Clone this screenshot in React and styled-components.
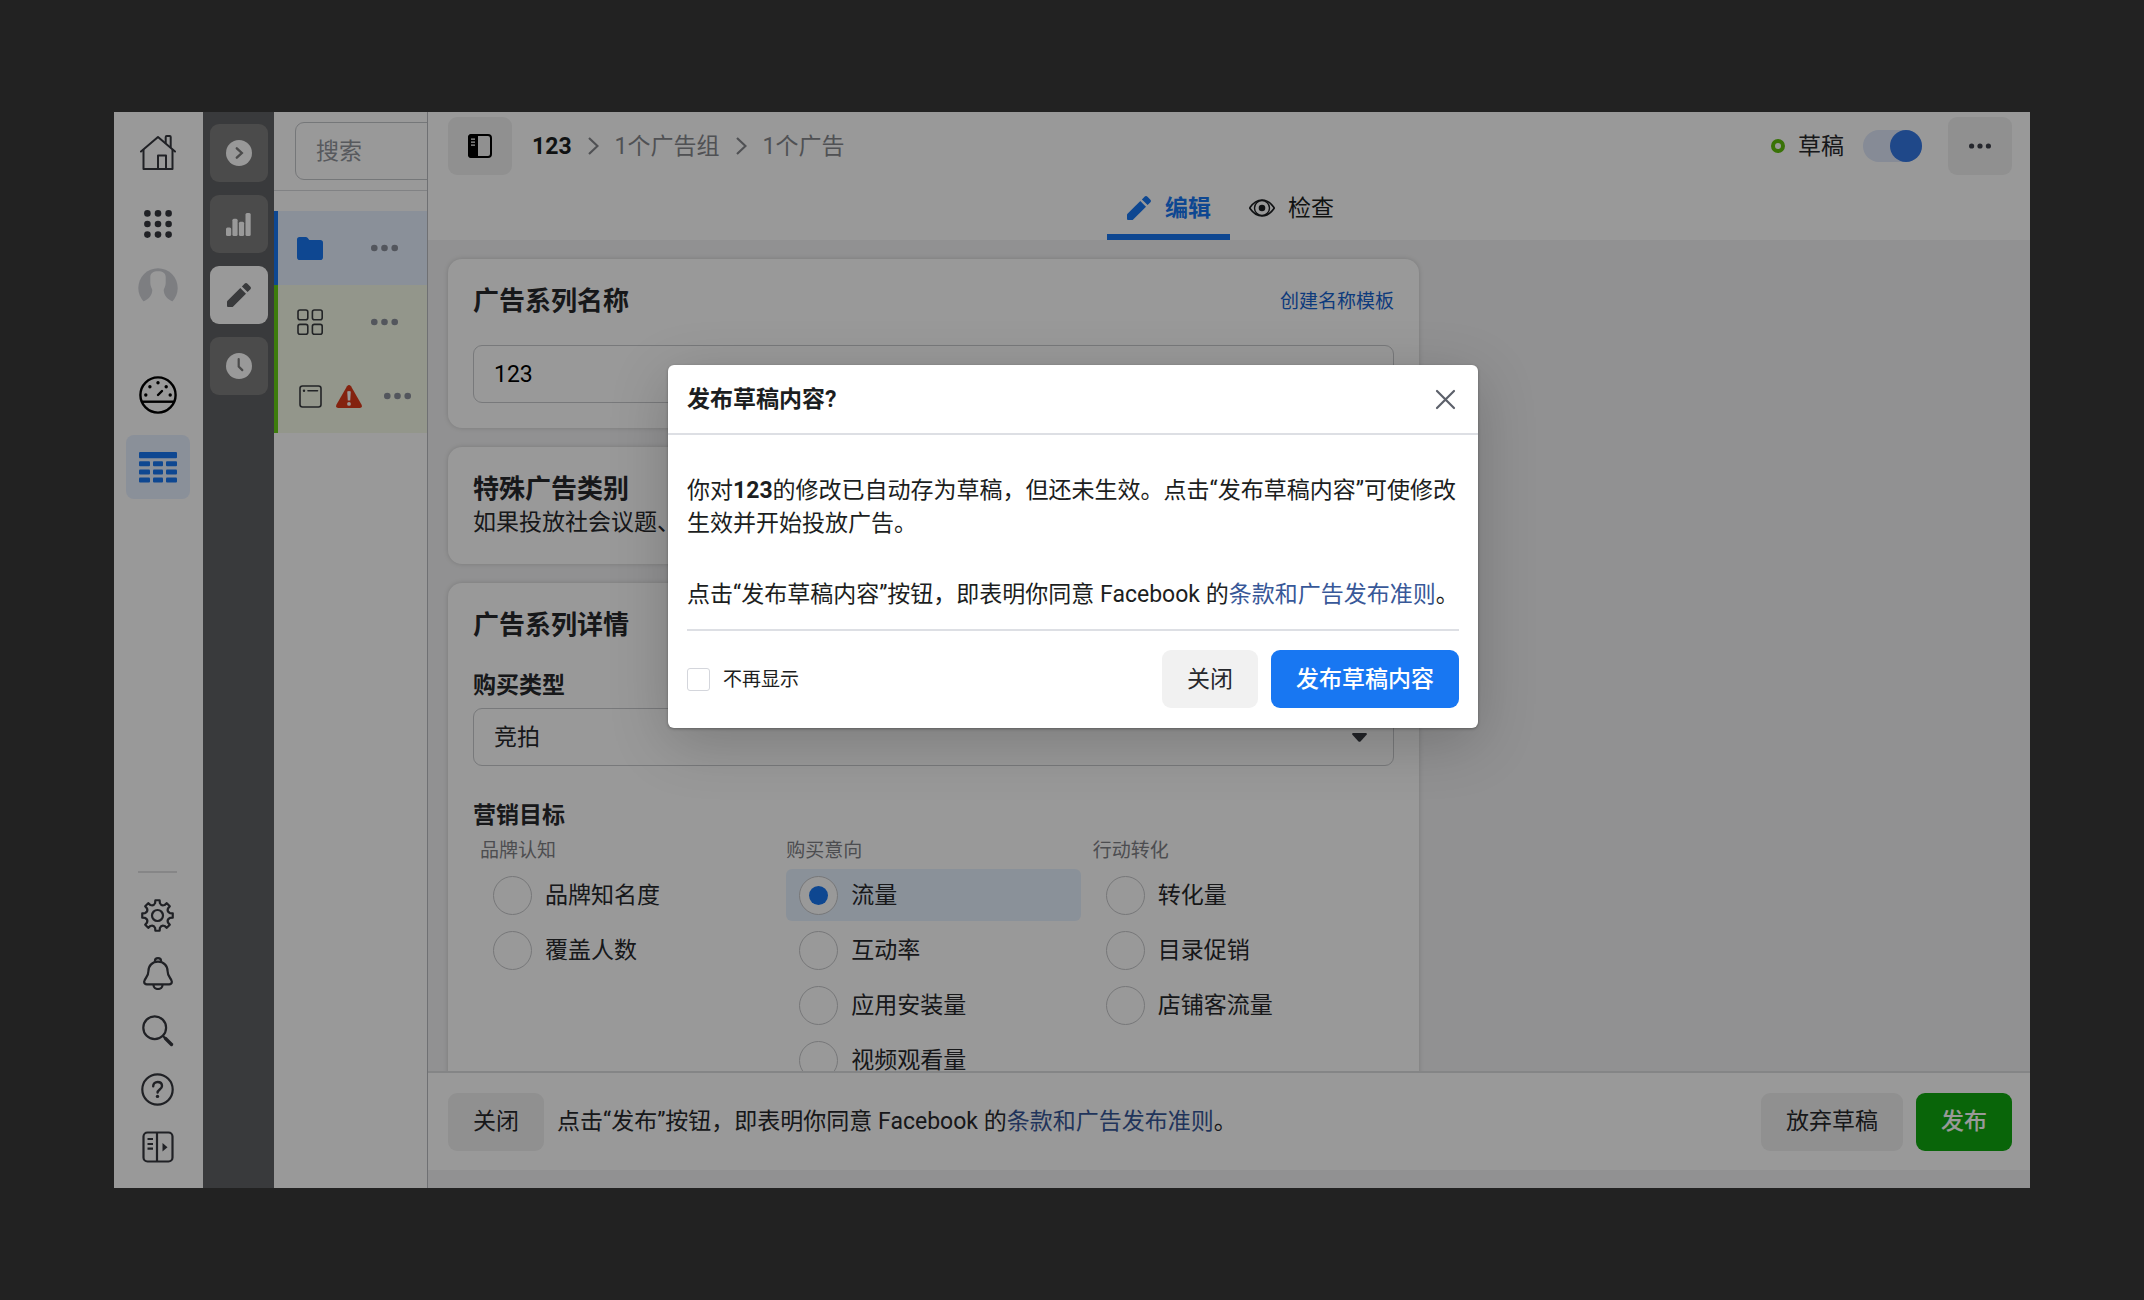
import React, { useState } from "react";
import styled, { createGlobalStyle } from "styled-components";

const GlobalStyle = createGlobalStyle`
  * {
    box-sizing: border-box;
  }
  body {
    margin: 0;
    background: #222222;
    color: #27282c;
    font-family: Roboto, "Noto Sans CJK SC", sans-serif;
    font-size: 23px;
    line-height: 33px;
  }
  button, input, select {
    font: inherit;
    color: inherit;
  }
  button {
    border: none;
    padding: 0;
    background: none;
    cursor: pointer;
  }
  svg {
    display: block;
    flex: none;
  }
  h2, h3, h4, p {
    margin: 0;
    padding: 0;
  }
`;

const Page = styled.div`
  height: 100vh;
  padding: 112px 114px;
`;

const AppWindow = styled.div`
  position: relative;
  display: flex;
  height: 100%;
  overflow: hidden;
  background: #ffffff;
`;

/* left rail */

const Rail = styled.nav`
  display: flex;
  flex-direction: column;
  align-items: center;
  flex: none;
  width: 89px;
  padding: 9px 2px 12px 0;
  color: #36383f;
`;

const RailGroup = styled.div`
  display: flex;
  flex-direction: column;
  align-items: center;
  gap: ${({ $gap }) => $gap || 0}px;
  margin-bottom: 50px;
`;

const RailBottom = styled.div`
  display: flex;
  flex-direction: column;
  align-items: center;
  margin-top: auto;
  padding-top: 13px;
  border-top: 2px solid #dfdfe1;
`;

const RailButton = styled.button`
  display: flex;
  align-items: center;
  justify-content: center;
  width: 64px;
  height: ${({ $height }) => $height || 64}px;
  border-radius: 8px;
  background: ${({ $active }) => ($active ? "#e7f0ff" : "none")};
  color: ${({ $active }) => ($active ? "#1877f2" : "inherit")};
`;

const SmallRailButton = styled(RailButton)`
  width: 39px;
  height: 58px;
`;

/* dark tool bar */

const ToolBar = styled.nav`
  display: flex;
  flex-direction: column;
  align-items: center;
  gap: 13px;
  flex: none;
  width: 71px;
  padding-top: 12px;
  background: #606164;
`;

const ToolButton = styled.button`
  display: flex;
  align-items: center;
  justify-content: center;
  width: 58px;
  height: 58px;
  border-radius: 9px;
  background: ${({ $active }) => ($active ? "#ffffff" : "#7d7d7d")};
  color: ${({ $active }) => ($active ? "#606164" : "#ffffff")};
`;

/* campaign tree */

const Tree = styled.aside`
  flex: none;
  width: 154px;
  overflow: hidden;
  border-right: 1px solid #b9bbc0;
`;

const SearchBox = styled.div`
  height: 79px;
  margin-bottom: 20px;
  padding: 10px 0 0 21px;
  border-bottom: 1px solid #d8d9dc;
`;

const SearchInput = styled.input`
  width: 240px;
  height: 58px;
  padding: 0 20px;
  border: 1px solid #c4c6ca;
  border-radius: 9px;
  background: #ffffff;
  &::placeholder {
    color: #92959c;
    opacity: 1;
  }
`;

const TreeRow = styled.div`
  display: flex;
  align-items: center;
  height: 74px;
  padding: 0 ${({ $wide }) => ($wide ? 16 : 29)}px 0 19px;
  border-left: 4px solid ${({ $selected }) => ($selected ? "#1877f2" : "#66cf14")};
  background: ${({ $selected }) => ($selected ? "#e7f0ff" : "#f5fbe8")};
`;

const TreeIcon = styled.span`
  display: flex;
  align-items: center;
  justify-content: center;
  width: 26px;
  margin-right: 13px;
`;

const DotsButton = styled.button`
  margin-left: auto;
  color: #8a8f9b;
`;

/* main column */

const Main = styled.main`
  display: flex;
  flex: 1;
  flex-direction: column;
  min-width: 0;
  background: #f2f2f3;
`;

const Header = styled.header`
  flex: none;
  padding-top: 5px;
  background: #ffffff;
`;

const HeaderRow = styled.div`
  display: flex;
  align-items: center;
  padding: 0 18px 0 20px;
`;

const SquareButton = styled.button`
  display: flex;
  align-items: center;
  justify-content: center;
  width: 64px;
  height: 58px;
  border-radius: 9px;
  background: #f1f1f1;
  color: #3f414b;
`;

const Crumbs = styled.div`
  display: flex;
  align-items: center;
  gap: 16px;
  margin-left: 20px;
  color: #85878c;
`;

const Crumb = styled.a`
  color: ${({ $current }) => ($current ? "#1c1e21" : "#85878c")};
  font-weight: ${({ $current }) => ($current ? 700 : 400)};
  text-decoration: none;
`;

const Status = styled.div`
  display: flex;
  align-items: center;
  gap: 13px;
  margin-left: auto;
`;

const StatusRing = styled.span`
  width: 14px;
  height: 14px;
  border: 4px solid #5fbf0c;
  border-radius: 50%;
`;

const StatusLabel = styled.label`
  display: flex;
  align-items: center;
  gap: 19px;
  margin-right: 13px;
`;

const Toggle = styled.input`
  appearance: none;
  display: flex;
  justify-content: flex-start;
  width: 59px;
  height: 32px;
  margin: 0;
  border-radius: 16px;
  background: #dcdfe6;
  cursor: pointer;
  &::before {
    content: "";
    width: 32px;
    height: 32px;
    border-radius: 50%;
    background: #90949c;
  }
  &:checked {
    justify-content: flex-end;
    background: #dfe8fa;
  }
  &:checked::before {
    background: #3578e5;
  }
`;

const Tabs = styled.div`
  display: flex;
  justify-content: center;
  padding-left: 2px;
`;

const Tab = styled.button`
  display: flex;
  align-items: center;
  gap: 13px;
  height: 65px;
  padding: 7px 19px 0;
  border-bottom: 6px solid ${({ $active }) => ($active ? "#1877f2" : "transparent")};
  color: ${({ $active }) => ($active ? "#1877f2" : "#1c1e21")};
  font-weight: ${({ $active }) => ($active ? 700 : 400)};
`;

const TabIcon = styled.span`
  display: flex;
  justify-content: center;
  width: 26px;
`;

const Content = styled.div`
  flex: 1;
  min-height: 0;
  overflow: hidden;
  padding: 19px 20px 0;
`;

const Card = styled.section`
  max-width: 971px;
  margin-bottom: 19px;
  padding: 25px;
  border-radius: 14px;
  background: #ffffff;
  box-shadow: 0 0 5px rgba(0, 0, 0, 0.16);
`;

const CardHead = styled.div`
  display: flex;
  align-items: center;
  justify-content: space-between;
  margin-bottom: 27px;
`;

const CardTitle = styled.h2`
  font-size: 26px;
  font-weight: 700;
  line-height: 34px;
`;

const TemplateLink = styled.a`
  color: #1763cf;
  font-size: 19px;
  text-decoration: none;
`;

const TextInput = styled.input`
  width: 100%;
  height: 58px;
  padding: 0 20px;
  border: 1px solid #c8cacd;
  border-radius: 9px;
  background: #ffffff;
  color: #000000;
`;

const FieldLabel = styled.label`
  display: block;
  margin-bottom: 6px;
  font-weight: 700;
`;

const GoalsTitle = styled.h3`
  font-size: 23px;
  font-weight: 700;
`;

const SelectWrap = styled.div`
  position: relative;
  margin-bottom: 33px;
`;

const Select = styled.select`
  appearance: none;
  display: block;
  width: 100%;
  height: 58px;
  padding: 0 20px;
  border: 1px solid #c8cacd;
  border-radius: 9px;
  background: #ffffff;
`;

const Caret = styled.span`
  position: absolute;
  top: 25px;
  right: 27px;
  color: #3a3c44;
  pointer-events: none;
`;

const Goals = styled.div`
  display: grid;
  grid-template-columns: repeat(3, 1fr);
  gap: 12px;
  margin: 0 7px;
`;

const GoalTitle = styled.h4`
  padding: 2px 0;
  color: #7f8186;
  font-size: 19px;
  font-weight: 400;
`;

const Goal = styled.label`
  display: flex;
  align-items: center;
  gap: 13px;
  height: 52px;
  margin-bottom: 3px;
  padding-left: 13px;
  border-radius: 6px;
  background: ${({ $checked }) => ($checked ? "#e7f2ff" : "none")};
`;

const Radio = styled.input`
  appearance: none;
  display: flex;
  align-items: center;
  justify-content: center;
  width: 39px;
  height: 39px;
  margin: 0;
  border: 1px solid #c6c7ca;
  border-radius: 50%;
  background: #ffffff;
  &:checked::before {
    content: "";
    width: 19px;
    height: 19px;
    border-radius: 50%;
    background: #1877f2;
  }
`;

const BottomBar = styled.footer`
  display: flex;
  align-items: center;
  gap: 13px;
  flex: none;
  height: 99px;
  margin-bottom: 18px;
  padding: 0 18px 0 20px;
  border-top: 2px solid #dddee0;
  background: #ffffff;
`;

const Agreement = styled.p`
  margin-right: auto;
`;

const Button = styled.button`
  height: 58px;
  padding: 0 25px;
  border-radius: 9px;
  white-space: nowrap;
  background: ${({ $kind }) =>
    $kind === "primary" ? "#1877f2" : $kind === "success" ? "#0fa80f" : "#f1f1f1"};
  color: ${({ $kind }) => ($kind ? "#ffffff" : "#27282c")};
  font-weight: ${({ $kind }) => ($kind ? 500 : 400)};
`;

const TermsLink = styled.a`
  color: #385898;
  text-decoration: none;
`;

/* dialog */

const Overlay = styled.div`
  position: absolute;
  inset: 0;
  display: flex;
  align-items: flex-start;
  justify-content: center;
  padding: 253px 0 0 2px;
  background: rgba(0, 0, 0, 0.4);
`;

const Dialog = styled.div`
  width: 810px;
  max-width: 100%;
  border-radius: 6px;
  background: #ffffff;
  color: #1c1e21;
  box-shadow: 0 1px 3px rgba(0, 0, 0, 0.3), 0 14px 60px rgba(0, 0, 0, 0.2);
`;

const DialogHead = styled.div`
  display: flex;
  align-items: center;
  justify-content: space-between;
  height: 70px;
  padding: 0 22px 0 19px;
  border-bottom: 2px solid #dddfe4;
`;

const DialogTitle = styled.h3`
  font-size: 23px;
  font-weight: 700;
`;

const Message = styled.div`
  padding: 39px 12px 18px 19px;
  p + p {
    margin-top: 38px;
  }
`;

const DialogFoot = styled.div`
  display: flex;
  align-items: center;
  gap: 13px;
  margin: 0 19px;
  padding: 19px 0 20px;
  border-top: 2px solid #dddfe4;
`;

const CheckLabel = styled.label`
  display: flex;
  align-items: center;
  gap: 13px;
  margin-right: auto;
  font-size: 19px;
`;

const Checkbox = styled.input`
  appearance: none;
  width: 23px;
  height: 23px;
  margin: 0;
  border: 1px solid #d4d6dc;
  border-radius: 3px;
  background: #ffffff;
  &:checked {
    background: #1877f2;
  }
`;

/* icons */

const HomeIcon = () => (
  <svg width="36" height="36" viewBox="0 0 36 36" fill="none" stroke="currentColor" strokeWidth="2" strokeLinecap="round" strokeLinejoin="round">
    <path d="M1 16.5 18 2l17 14.5" />
    <path d="M25.7 8V2q0-1 1-1h3q1 0 1 1v10" />
    <path d="M3.5 15v19h29V15" />
    <path d="M18 34V20.5h8V34" />
  </svg>
);

const AppsIcon = () => (
  <svg width="28" height="28" viewBox="0 0 28 28" fill="currentColor">
    {[3.4, 14, 24.6].map((y) => [3.4, 14, 24.6].map((x) => <circle key={x + "-" + y} cx={x} cy={y} r="3.3" />))}
  </svg>
);

const AvatarIcon = () => (
  <svg width="40" height="40" viewBox="0 0 40 40">
    <circle cx="20" cy="20" r="19.7" fill="#d0d2d8" />
    <path
      d="M12.3 9C12.3 5 15.3 3.2 20 3.2S27.7 5 27.7 9v6c0 3-1.5 5-2 7 .3 5 2.5 8.500 9.300 11.700V41H5v-7.300C11.800 30.500 14 27 14.300 22c-.5-2-2-4-2-7z"
      fill="#ffffff"
    />
  </svg>
);

const GaugeIcon = () => (
  <svg width="38" height="38" viewBox="0 0 38 38" fill="none" stroke="#000000" strokeWidth="2.4">
    <circle cx="19" cy="19" r="17.6" />
    <path d="M3 25.7h32" />
    <path d="M19 19l4-4" strokeLinecap="round" />
    <g fill="#000000" stroke="none">
      <circle cx="6.8" cy="19" r="1.7" />
      <circle cx="10.9" cy="10.7" r="1.7" />
      <circle cx="19" cy="6.8" r="1.7" />
      <circle cx="27.2" cy="10.7" r="1.7" />
      <circle cx="31.2" cy="19" r="1.7" />
    </g>
  </svg>
);

const TableIcon = () => (
  <svg width="38" height="31" viewBox="0 0 38 31" fill="currentColor">
    <rect x="0" y="0" width="38" height="6.3" rx="1" />
    {[9.3, 17.4, 25.4].map((y) => (
      <g key={y}>
        <rect x="0" y={y} width="11" height="5" rx="1" />
        <rect x="14" y={y} width="10" height="5" rx="1" />
        <rect x="27" y={y} width="11" height="5" rx="1" />
      </g>
    ))}
  </svg>
);

// eight teeth with hollow valleys between them
const gearPath = () => {
  const at = (deg, r) => {
    const a = ((deg - 90) * Math.PI) / 180;
    return `${(16.5 + r * Math.cos(a)).toFixed(2)} ${(16.5 + r * Math.sin(a)).toFixed(2)}`;
  };
  let d = "";
  for (let i = 0; i < 8; i++) {
    const a = i * 45;
    d += `${i ? "L" : "M"}${at(a - 8, 15.4)}L${at(a + 8, 15.4)}L${at(a + 11, 12.6)}`;
    d += `Q${at(a + 22.5, 10)} ${at(a + 34, 12.6)}`;
  }
  return d + "Z";
};

const GearIcon = () => (
  <svg width="33" height="33" viewBox="0 0 33 33" fill="none" stroke="currentColor" strokeWidth="2.2" strokeLinejoin="round">
    <path d={gearPath()} />
    <circle cx="16.5" cy="16.5" r="5.5" />
  </svg>
);

const BellIcon = () => (
  <svg width="30" height="33" viewBox="0 0 30 33" fill="none" stroke="currentColor" strokeWidth="2.2" strokeLinejoin="round">
    <path d="M15 4.7c5.6 0 9.6 4 9.6 9.5 0 6 3.8 6.8 4.2 10.3.2 1.9-1.2 2.8-2.6 2.8H3.8c-1.4 0-2.8-.9-2.6-2.8.4-3.5 4.2-4.3 4.2-10.3 0-5.5 4-9.5 9.6-9.5z" />
    <path d="M12 5V3.7a3 2.6 0 0 1 6 0V5" />
    <path d="M10.5 28a4.5 4 0 0 0 9 0" />
  </svg>
);

const SearchIcon = () => (
  <svg width="32" height="32" viewBox="0 0 32 32" fill="none" stroke="currentColor" strokeLinecap="round">
    <circle cx="12.7" cy="12.7" r="11.4" strokeWidth="2.2" />
    <path d="M21 21l2.5 2.5" strokeWidth="2.2" />
    <path d="M23.5 23.5l6 6" strokeWidth="3.4" />
  </svg>
);

const HelpIcon = () => (
  <svg width="33" height="33" viewBox="0 0 33 33" fill="none" stroke="currentColor" strokeWidth="2.2">
    <circle cx="16.5" cy="16.5" r="15.2" />
    <path d="M12.2 13.3c0-2.5 1.9-4.3 4.4-4.3 2.6 0 4.4 1.6 4.4 4 0 3.4-4.4 3.5-4.4 6.6" strokeWidth="2.4" strokeLinecap="round" />
    <circle cx="16.5" cy="23.4" r="1.7" fill="currentColor" stroke="none" />
  </svg>
);

const CollapseIcon = () => (
  <svg width="32" height="32" viewBox="0 0 32 32" fill="none" stroke="currentColor" strokeWidth="2.2">
    <rect x="1.5" y="1.5" width="29" height="29" rx="4" />
    <path d="M15 1.5v29M5.5 8H11M5.5 13H11M5.5 17.7H11" />
    <path d="M20.5 12l5 4.200-5 4.200z" fill="currentColor" stroke="none" />
  </svg>
);

const ExpandIcon = () => (
  <svg width="26" height="26" viewBox="0 0 26 26">
    <circle cx="13" cy="13" r="13" fill="currentColor" />
    <path d="M10.8 8.3l5 4.7-5 4.7" fill="none" stroke="#7d7d7d" strokeWidth="2.4" strokeLinecap="round" />
  </svg>
);

const BarsIcon = () => (
  <svg width="25" height="23" viewBox="0 0 25 23" fill="currentColor">
    <rect x="0" y="14.5" width="5.2" height="8.5" rx="1.5" />
    <rect x="6.4" y="5.7" width="5.2" height="17.3" rx="1.5" />
    <rect x="12.9" y="8.7" width="5.2" height="14.3" rx="1.5" />
    <rect x="19.5" y="0" width="5.2" height="23" rx="1.5" />
  </svg>
);

const PencilIcon = () => (
  <svg width="24" height="24" viewBox="0 0 24 24" fill="currentColor">
    <path d="M0 23v-4q0-.8.5-1.3L13.3 5l5.7 5.7L6.2 23.5q-.5.5-1.3.5H1q-1 0-1-1z" />
    <path d="M14.9 3.4L17.5.8q1.5-1.5 3 0l2.7 2.7q1.5 1.5 0 3l-2.6 2.6z" />
  </svg>
);

const ClockIcon = () => (
  <svg width="26" height="26" viewBox="0 0 26 26">
    <circle cx="13" cy="13" r="13" fill="currentColor" />
    <path d="M12.7 6v7.5l3.6 3.6" fill="none" stroke="#7d7d7d" strokeWidth="2.2" strokeLinecap="round" />
  </svg>
);

const FolderIcon = () => (
  <svg width="26" height="23" viewBox="0 0 26 23" fill="#1877f2">
    <path d="M2.5 0h6.3q1 0 1.7.8L12.3 3h11q2.7 0 2.7 2.7v14.5q0 2.8-2.8 2.8H2.8Q0 23 0 20.2V2.5Q0 0 2.5 0z" />
  </svg>
);

const GridIcon = () => (
  <svg width="26" height="26" viewBox="0 0 26 26" fill="none" stroke="#3a3c40" strokeWidth="1.6">
    <rect x="1" y="1" width="9.8" height="9.8" rx="2" />
    <rect x="15.4" y="1" width="9.8" height="9.8" rx="2" />
    <rect x="1" y="15.4" width="9.8" height="9.8" rx="2" />
    <rect x="15.4" y="15.4" width="9.8" height="9.8" rx="2" />
  </svg>
);

const AdIcon = () => (
  <svg width="23" height="23" viewBox="0 0 23 23" fill="none" stroke="#3a3c40" strokeWidth="1.6">
    <rect x="1" y="1" width="21" height="21" rx="2.5" />
    <path d="M9 5.8h9.5" strokeLinecap="round" />
    <circle cx="5" cy="5.8" r="1.2" fill="#3a3c40" stroke="none" />
  </svg>
);

const WarningIcon = () => (
  <svg width="26" height="23" viewBox="0 0 26 23">
    <path d="M11 1.2q2-2.4 4 0l10.6 18.6q1 3-1.8 3.2H2.2Q-.6 22.8.4 19.8z" fill="#dc3a1a" />
    <path d="M11.2 6.5q1.8-1.2 3.6 0l-.6 9h-2.4z" fill="#ffffff" />
    <circle cx="13" cy="18.9" r="1.9" fill="#ffffff" />
  </svg>
);

const DotsIcon = ({ width = 27, radius = 3.3 }) => (
  <svg width={width} height="8" viewBox={`0 0 ${width} 8`} fill="currentColor">
    {[radius, width / 2, width - radius].map((x) => (
      <circle key={x} cx={x} cy="4" r={radius} />
    ))}
  </svg>
);

const PanelIcon = () => (
  <svg width="24" height="24" viewBox="0 0 24 24">
    <rect x="1" y="1" width="22" height="22" rx="3" fill="none" stroke="#000000" strokeWidth="2" />
    <path d="M3.5 0H10v24H3.5Q0 24 0 20.5v-17Q0 0 3.5 0z" fill="#000000" />
    <path d="M3 5.2h4M3 8.2h4M3 11.2h4" stroke="#ffffff" strokeWidth="1.2" />
  </svg>
);

const ChevronIcon = () => (
  <svg width="11" height="18" viewBox="0 0 11 18" fill="none" stroke="currentColor" strokeWidth="2.2">
    <path d="M1 1l8.5 8L1 17" />
  </svg>
);

const EyeIcon = () => (
  <svg width="26" height="18" viewBox="0 0 26 18" fill="none" stroke="currentColor" strokeWidth="1.7">
    <path d="M1 9.5Q.6 9 1 8.5C4.5 3.500 8.500 1 13 1s8.500 2.500 12 7.500q.4.5 0 1C21.500 14.500 17.500 17 13 17S4.500 14.500 1 9.500z" />
    <circle cx="13" cy="9" r="7.5" strokeWidth="1.4" />
    <circle cx="13" cy="9" r="3.3" fill="currentColor" stroke="none" />
  </svg>
);

const CaretIcon = () => (
  <svg width="15" height="9" viewBox="0 0 15 9" fill="currentColor">
    <path d="M1.2 0h12.6q1.7.3.8 1.8L8.7 8.3q-1.2 1-2.4 0L.4 1.8Q-.5.3 1.2 0z" />
  </svg>
);

const CloseIcon = () => (
  <svg width="21" height="21" viewBox="0 0 21 21" fill="none" stroke="#5c606a" strokeWidth="2.2" strokeLinecap="round">
    <path d="M2 2l17 17M19 2L2 19" />
  </svg>
);

const goalGroups = [
  { title: "品牌认知", items: ["品牌知名度", "覆盖人数"] },
  { title: "购买意向", items: ["流量", "互动率", "应用安装量", "视频观看量"] },
  { title: "行动转化", items: ["转化量", "目录促销", "店铺客流量"] },
];

const Terms = () => (
  <>
    <TermsLink href="#terms">条款和广告发布准则</TermsLink>。
  </>
);

const SideNav = () => (
  <Rail>
    <RailGroup $gap={7}>
      <RailButton aria-label="主页"><HomeIcon /></RailButton>
      <RailButton aria-label="所有工具"><AppsIcon /></RailButton>
      <RailButton $height={50} aria-label="账户"><AvatarIcon /></RailButton>
    </RailGroup>
    <RailGroup $gap={8}>
      <RailButton aria-label="概览"><GaugeIcon /></RailButton>
      <RailButton $active aria-label="广告系列"><TableIcon /></RailButton>
    </RailGroup>
    <RailBottom>
      <SmallRailButton aria-label="设置"><GearIcon /></SmallRailButton>
      <SmallRailButton aria-label="通知"><BellIcon /></SmallRailButton>
      <SmallRailButton aria-label="搜索"><SearchIcon /></SmallRailButton>
      <SmallRailButton aria-label="帮助"><HelpIcon /></SmallRailButton>
      <SmallRailButton aria-label="展开菜单"><CollapseIcon /></SmallRailButton>
    </RailBottom>
  </Rail>
);

const CampaignTree = () => (
  <Tree>
    <SearchBox>
      <SearchInput type="text" placeholder="搜索" aria-label="搜索" />
    </SearchBox>
    <TreeRow $selected>
      <TreeIcon><FolderIcon /></TreeIcon>
      <DotsButton aria-label="更多"><DotsIcon /></DotsButton>
    </TreeRow>
    <TreeRow>
      <TreeIcon><GridIcon /></TreeIcon>
      <DotsButton aria-label="更多"><DotsIcon /></DotsButton>
    </TreeRow>
    <TreeRow $wide>
      <TreeIcon><AdIcon /></TreeIcon>
      <WarningIcon />
      <DotsButton aria-label="更多"><DotsIcon /></DotsButton>
    </TreeRow>
  </Tree>
);

const PublishDialog = ({ onClose }) => (
  <Overlay>
    <Dialog role="dialog" aria-labelledby="dialog-title">
      <DialogHead>
        <DialogTitle id="dialog-title">发布草稿内容?</DialogTitle>
        <button onClick={onClose} aria-label="关闭"><CloseIcon /></button>
      </DialogHead>
      <Message>
        <p>
          你对<b>123</b>的修改已自动存为草稿，但还未生效。点击“发布草稿内容”可使修改生效并开始投放广告。
        </p>
        <p>
          点击“发布草稿内容”按钮，即表明你同意 Facebook 的<Terms />
        </p>
      </Message>
      <DialogFoot>
        <CheckLabel>
          <Checkbox type="checkbox" />
          不再显示
        </CheckLabel>
        <Button onClick={onClose}>关闭</Button>
        <Button $kind="primary" onClick={onClose}>发布草稿内容</Button>
      </DialogFoot>
    </Dialog>
  </Overlay>
);

const App = () => {
  const [open, setOpen] = useState(true);
  const [active, setActive] = useState(true);
  const [name, setName] = useState("123");
  const [goal, setGoal] = useState("流量");

  return (
    <Page lang="zh-CN">
      <GlobalStyle />
      <AppWindow>
        <SideNav />
        <ToolBar>
          <ToolButton aria-label="展开"><ExpandIcon /></ToolButton>
          <ToolButton aria-label="图表"><BarsIcon /></ToolButton>
          <ToolButton $active aria-label="编辑"><PencilIcon /></ToolButton>
          <ToolButton aria-label="历史记录"><ClockIcon /></ToolButton>
        </ToolBar>
        <CampaignTree />
        <Main>
          <Header>
            <HeaderRow>
              <SquareButton aria-label="切换面板"><PanelIcon /></SquareButton>
              <Crumbs>
                <Crumb $current href="#campaign">123</Crumb>
                <ChevronIcon />
                <Crumb href="#adset">1个广告组</Crumb>
                <ChevronIcon />
                <Crumb href="#ad">1个广告</Crumb>
              </Crumbs>
              <Status>
                <StatusRing />
                <StatusLabel>
                  草稿
                  <Toggle type="checkbox" checked={active} onChange={() => setActive(!active)} />
                </StatusLabel>
                <SquareButton aria-label="更多"><DotsIcon width={22} radius={2.6} /></SquareButton>
              </Status>
            </HeaderRow>
            <Tabs>
              <Tab $active>
                <TabIcon><PencilIcon /></TabIcon>
                编辑
              </Tab>
              <Tab>
                <TabIcon><EyeIcon /></TabIcon>
                检查
              </Tab>
            </Tabs>
          </Header>
          <Content>
            <Card>
              <CardHead>
                <CardTitle>广告系列名称</CardTitle>
                <TemplateLink href="#template">创建名称模板</TemplateLink>
              </CardHead>
              <TextInput
                type="text"
                aria-label="广告系列名称"
                value={name}
                onChange={(e) => setName(e.target.value)}
              />
            </Card>
            <Card>
              <CardTitle>特殊广告类别</CardTitle>
              <p>如果投放社会议题、</p>
            </Card>
            <Card>
              <CardHead>
                <CardTitle>广告系列详情</CardTitle>
              </CardHead>
              <FieldLabel htmlFor="buying-type">购买类型</FieldLabel>
              <SelectWrap>
                <Select id="buying-type">
                  <option>竞拍</option>
                </Select>
                <Caret><CaretIcon /></Caret>
              </SelectWrap>
              <GoalsTitle>营销目标</GoalsTitle>
              <Goals>
                {goalGroups.map((group) => (
                  <div key={group.title}>
                    <GoalTitle>{group.title}</GoalTitle>
                    {group.items.map((item) => (
                      <Goal key={item} $checked={item === goal}>
                        <Radio
                          type="radio"
                          name="goal"
                          checked={item === goal}
                          onChange={() => setGoal(item)}
                        />
                        {item}
                      </Goal>
                    ))}
                  </div>
                ))}
              </Goals>
            </Card>
          </Content>
          <BottomBar>
            <Button>关闭</Button>
            <Agreement>
              点击“发布”按钮，即表明你同意 Facebook 的<Terms />
            </Agreement>
            <Button>放弃草稿</Button>
            <Button $kind="success" onClick={() => setOpen(true)}>发布</Button>
          </BottomBar>
        </Main>
        {open && <PublishDialog onClose={() => setOpen(false)} />}
      </AppWindow>
    </Page>
  );
};

export default App;
